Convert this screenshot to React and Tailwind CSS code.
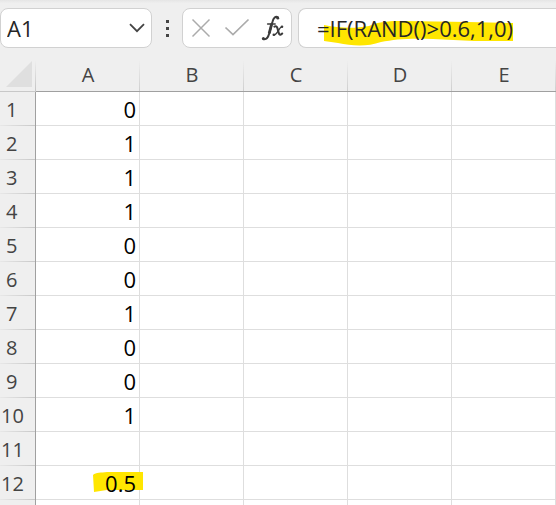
import React from "react";

const columns = ["A", "B", "C", "D", "E"];
const values = ["0", "1", "1", "1", "0", "0", "1", "0", "0", "1", "", "0.5"];

function NameBox() {
  return (
    <div className="flex h-10 w-[152px] shrink-0 items-center rounded-lg border border-[#d1d1d1] bg-white pr-0.5 pl-1.5">
      <input
        aria-label="Name box"
        defaultValue="A1"
        className="w-0 min-w-0 grow bg-transparent text-[22px] leading-8 text-[#262626] outline-none"
      />
      <button type="button" aria-label="Show names" className="flex size-6 items-center justify-center">
        <svg width="16" height="10" viewBox="0 0 16 10" fill="none" stroke="#444" strokeWidth="1.8">
          <path d="M1 1.2 8 8.2 15 1.2" />
        </svg>
      </button>
    </div>
  );
}

function FormulaButtons() {
  return (
    <div className="flex h-10 w-[110px] shrink-0 items-center justify-between rounded-lg border border-[#d1d1d1] bg-white px-1.5">
      <button type="button" aria-label="Cancel" className="flex w-6 justify-center">
        <svg width="20" height="20" viewBox="0 0 20 20" fill="none" stroke="#ababab" strokeWidth="1.5">
          <path d="M1.5 1.5 18.5 18.5M18.5 1.5 1.5 18.5" />
        </svg>
      </button>
      <button type="button" aria-label="Enter" className="flex w-7 justify-center">
        <svg width="26" height="20" viewBox="0 0 26 20" fill="none" stroke="#ababab" strokeWidth="1.7">
          <path d="M1.5 9.5 9 16.5 24.5 1.5" />
        </svg>
      </button>
      <button type="button" aria-label="Insert function" className="flex w-6 justify-center">
        <svg width="24" height="28" viewBox="0 0 24 28" fill="none" stroke="#3b3b3b" strokeLinecap="round">
          <path d="M17 3.4C14.6 1.8 12.4 4 11.4 8L8.2 19.6C7.2 23.4 5.2 25.8 2.4 25.2" strokeWidth="2" />
          <path d="M10.8 9.5 8.2 19.4" strokeWidth="2.8" strokeLinecap="butt" />
          <circle cx="16.8" cy="4.2" r="1.4" fill="#3b3b3b" stroke="none" />
          <circle cx="2.4" cy="24.6" r="1.5" fill="#3b3b3b" stroke="none" />
          <path d="M6.6 10H14.2" strokeWidth="1.4" />
          <path d="M13.4 12.6C15.6 11.4 16.4 13.4 17 16.2C17.6 19.2 18.4 22.4 21.2 19.6" strokeWidth="2.1" />
          <path d="M21.2 12.6C18.8 12 16 21.4 12.8 21" strokeWidth="1.4" />
          <circle cx="21" cy="12.8" r="1.3" fill="#3b3b3b" stroke="none" />
          <circle cx="12.8" cy="20.8" r="1.3" fill="#3b3b3b" stroke="none" />
        </svg>
      </button>
    </div>
  );
}

function FormulaInput() {
  return (
    <div className="relative h-10 min-w-0 grow rounded-l-lg border border-r-0 border-[#d1d1d1] bg-white">
      <svg className="absolute top-3 left-6" width="192" height="26" viewBox="0 0 192 26" fill="#ffe600" aria-hidden="true">
        <path d="M1 4C16 7 31 8 46 5C58 0 68 0 80 0L145 1L190 2V20H151L110 18C88 17 72 18 58 21C44 26 29 25 15 22L1 20Z" />
      </svg>
      <input
        aria-label="Formula bar"
        defaultValue="=IF(RAND()>0.6,1,0)"
        className="relative h-full w-full bg-transparent pl-[18px] text-[22px] text-[#262626] outline-none"
      />
    </div>
  );
}

function Sheet() {
  return (
    <table className="w-full table-fixed border-separate border-spacing-0">
      <colgroup>
        <col className="w-9" />
        {columns.map((name) => (
          <col key={name} />
        ))}
      </colgroup>
      <thead>
        <tr className="h-8">
          <th className="border-b border-[#c8c8c8] bg-[#efefef] bg-linear-to-b from-[#efefef] to-[#c4c4c4] bg-[length:1px_100%] bg-right bg-no-repeat p-0">
            <button type="button" aria-label="Select all" className="flex h-[31px] w-full items-end justify-end pr-1 pb-1">
              <svg width="26" height="26" viewBox="0 0 26 26" fill="#dfdfdf">
                <path d="M26 0V26H0Z" />
              </svg>
            </button>
          </th>
          {columns.map((name) => (
            <th
              key={name}
              scope="col"
              className="border-b border-[#a0a0a0] bg-[#efefef] bg-linear-to-b from-[#efefef] to-[#cfcfcf] bg-[length:1px_100%] bg-right bg-no-repeat p-0 pb-0.5 text-xl leading-7 font-normal text-[#444]"
            >
              {name}
            </th>
          ))}
        </tr>
      </thead>
      <tbody>
        {values.map((value, row) => (
          <tr key={row} className="h-[34px]">
            <th
              scope="row"
              className="border-r border-[#a0a0a0] bg-[#efefef] bg-linear-to-r from-[#e8e8e8] to-[#c8c8c8] bg-[length:100%_1px] bg-bottom bg-no-repeat p-0 pt-0.5 text-xl leading-7 font-normal text-[#444]"
            >
              <div className={row < 9 ? "pl-1.5 text-left" : "pl-px text-left"}>{row + 1}</div>
            </th>
            {columns.map((name) => (
              <td
                key={name}
                className="relative border-r border-b border-[#dedede] bg-white p-0 pr-[3px] text-right text-[22px] leading-8 text-black"
              >
                {name === "A" && row === 11 && (
                  <svg className="absolute top-1.5 -right-1 z-10" width="50" height="20" viewBox="0 0 50 20" fill="#ffe600" aria-hidden="true">
                    <path d="M0 3C3 0 8 1 14 0L50 0V18H27L14 18L1 20Z" />
                  </svg>
                )}
                {name === "A" && <span className="relative z-20">{value}</span>}
              </td>
            ))}
          </tr>
        ))}
        <tr className="h-1.5">
          <th className="border-r border-[#a0a0a0] bg-[#efefef] p-0" />
          {columns.map((name) => (
            <td key={name} className="border-r border-[#dedede] bg-white p-0" />
          ))}
        </tr>
      </tbody>
    </table>
  );
}

export default function App() {
  return (
    <main className="h-screen overflow-hidden bg-[#efefef] font-['Open_Sans','Noto_Sans',sans-serif]">
      <div className="h-2 bg-linear-to-b from-[#e5e5e5] to-[#efefef] to-40%" />
      <div className="mb-3 flex items-center">
        <NameBox />
        <div className="flex w-[30px] shrink-0 flex-col items-center gap-1" aria-hidden="true">
          <span className="size-[3px] bg-[#444]" />
          <span className="size-[3px] bg-[#444]" />
          <span className="size-[3px] bg-[#444]" />
        </div>
        <FormulaButtons />
        <div className="w-1.5 shrink-0" />
        <FormulaInput />
      </div>
      <Sheet />
    </main>
  );
}
